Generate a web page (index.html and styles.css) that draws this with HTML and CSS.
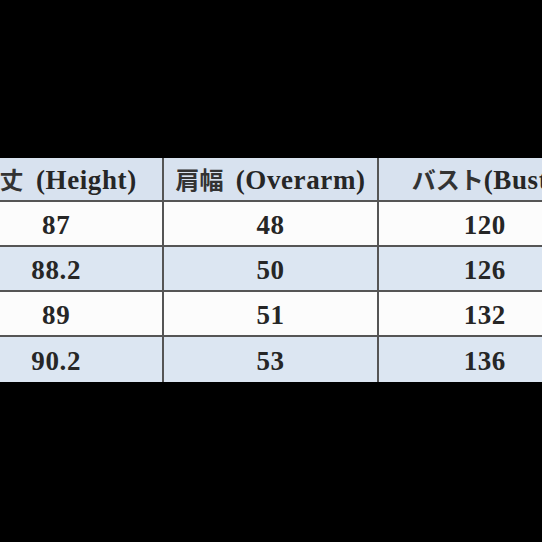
FILE: index.html
```html
<!DOCTYPE html>
<html lang="ja">
<head>
<meta charset="utf-8">
<title>Size chart</title>
<link rel="stylesheet" href="styles.css">
</head>
<body>
<div class="sheet">
  <table class="chart">
    <thead>
      <tr class="head">
        <th><span class="cjk gap">着丈</span> (Height)</th>
        <th><span class="cjk gap">肩幅</span> (Overarm)</th>
        <th><span class="cjk">バスト</span>(Bust)</th>
      </tr>
    </thead>
    <tbody>
      <tr class="white"><td>87</td><td>48</td><td>120</td></tr>
      <tr class="blue"><td>88.2</td><td>50</td><td>126</td></tr>
      <tr class="white"><td>89</td><td>51</td><td>132</td></tr>
      <tr class="blue"><td>90.2</td><td>53</td><td>136</td></tr>
    </tbody>
  </table>
</div>
</body>
</html>
```
FILE: styles.css
```css
html, body {
  margin: 0;
  padding: 0;
  background: #000;
  width: 542px;
  height: 542px;
  overflow: hidden;
}
.sheet {
  padding-top: 158px;
}
.chart {
  margin-left: -52px;
  width: 645px;
  table-layout: fixed;
  border-collapse: collapse;
  font-family: "Liberation Serif", "Noto Sans CJK JP", serif;
  font-weight: bold;
  font-size: 27px;
  letter-spacing: 0.6px;
  color: #262626;
}
.chart th, .chart td {
  text-align: center;
  vertical-align: middle;
  padding: 0;
  white-space: nowrap;
  border-left: 2px solid #555;
  border-right: 2px solid #555;
  border-bottom: 2px solid #555;
}
.cjk {
  font-family: "Noto Sans CJK JP", sans-serif;
  font-size: 24px;
  letter-spacing: 0;
  color: #333;
}
.gap {
  margin-right: 5px;
}
.head th {
  height: 41px;
  background: #d8e2ef;
  font-weight: bold;
  padding-bottom: 1px;
}
.chart td {
  height: 40px;
  padding-top: 3px;
}
.white td { background: #fcfcfc; }
.blue td { background: #dce6f2; }
.chart tbody tr:last-child td { border-bottom: none; height: 42px; }
```
